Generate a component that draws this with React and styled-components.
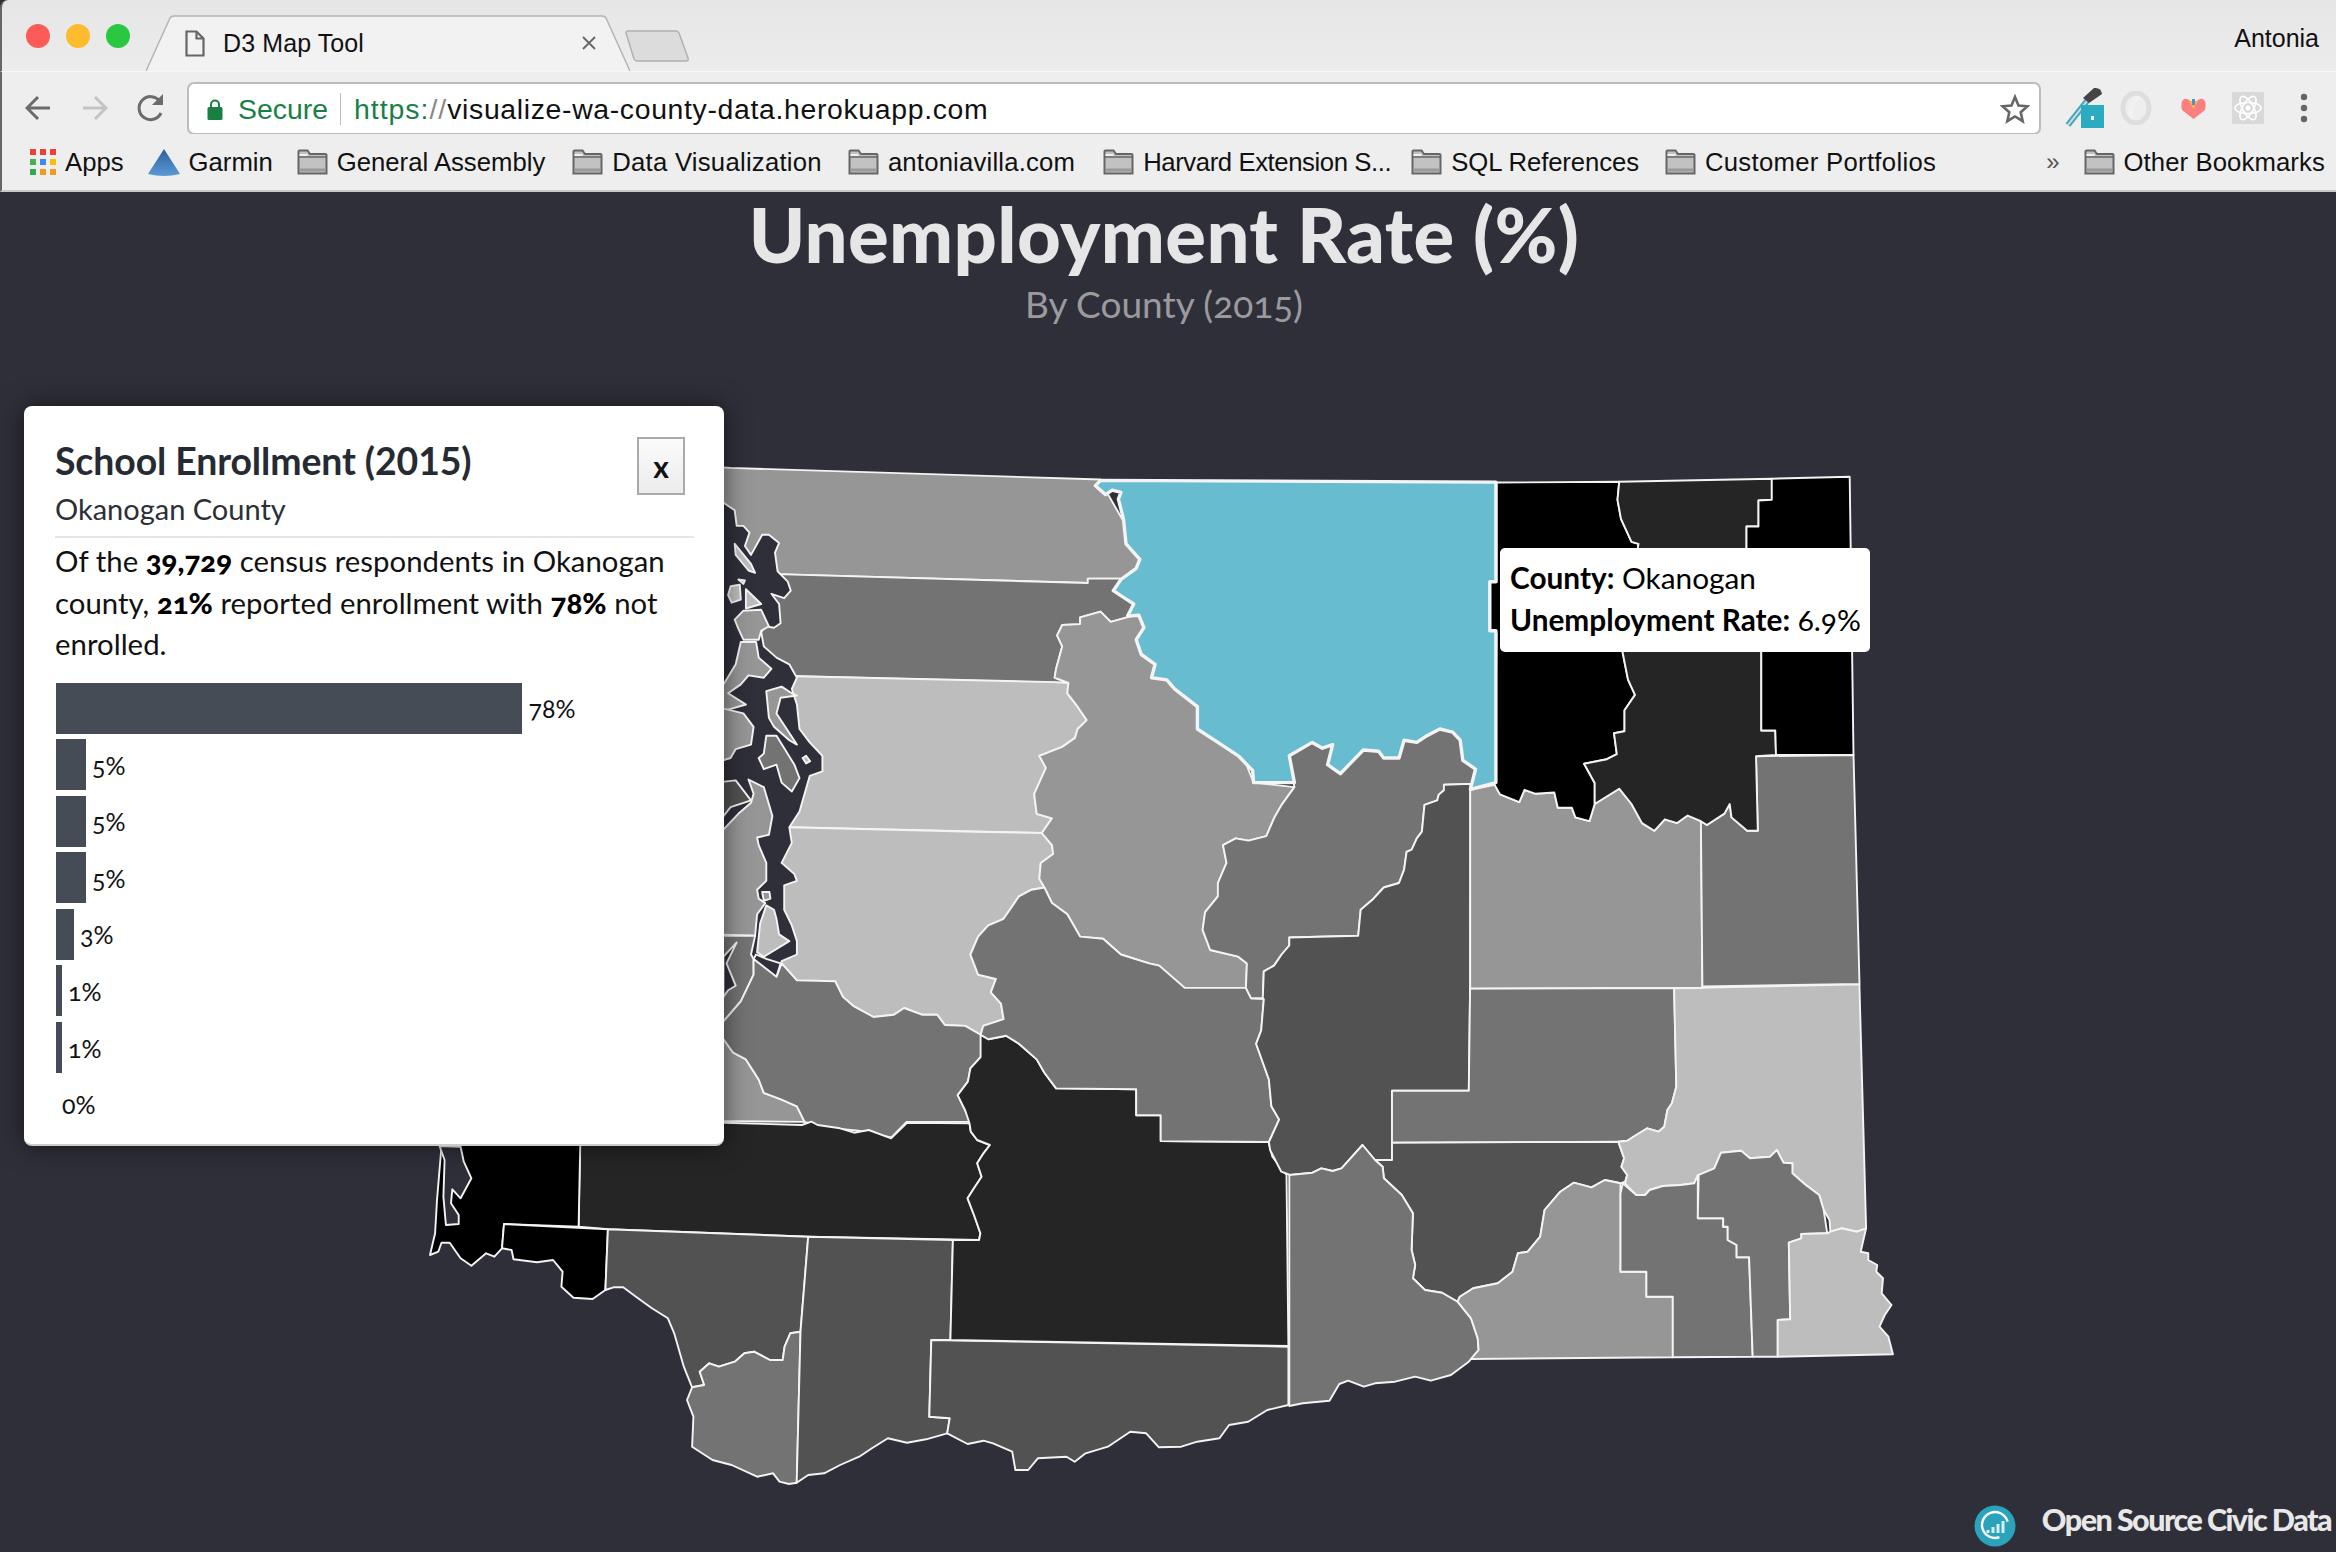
import React from 'react';
import styled, { createGlobalStyle } from 'styled-components';

const GlobalStyle = createGlobalStyle`
  html, body { margin: 0; padding: 0; background: #2f2f3a; }
  body { width: 2336px; height: 1552px; overflow: hidden; font-family: "Liberation Sans", Arial, sans-serif; }
`;

const Window = styled.div`
  width: 2336px;
  height: 1552px;
  display: flex;
  flex-direction: column;
  overflow: hidden;
`;

const TabBar = styled.div`
  height: 71px;
  flex: none;
  display: flex;
  align-items: flex-end;
  padding-left: 24px;
  background: linear-gradient(#e6e6e6, #ececec);
  border-left: 2px solid #666;
  box-sizing: border-box;
  border-top-left-radius: 8px;
`;

const Lights = styled.div`
  display: flex;
  gap: 16px;
  align-self: flex-start;
  margin-top: 24px;
`;

const Light = styled.span`
  width: 24px;
  height: 24px;
  border-radius: 50%;
  background: ${p => p.$color};
`;

const Tab = styled.div`
  position: relative;
  margin-left: 16px;
  width: 484px;
  height: 56px;
  display: flex;
  align-items: center;
  padding: 0 34px 0 39px;
  box-sizing: border-box;
  font-size: 25px;
  color: #111;
  svg.shape { position: absolute; left: 0; top: 0; }
`;

const TabText = styled.span`
  position: relative;
  margin-left: 18px;
  flex: 1;
  letter-spacing: 0.1px;
`;

const NewTab = styled.svg`
  margin-left: -6px;
  align-self: flex-start;
  margin-top: 30px;
`;

const Profile = styled.div`
  margin-left: auto;
  margin-right: 17px;
  align-self: flex-start;
  margin-top: 24px;
  font-size: 25px;
  color: #111;
`;

const Toolbar = styled.div`
  height: 63px;
  flex: none;
  box-sizing: border-box;
  padding: 10px 0 0 23px;
  display: flex;
  align-items: center;
  background: #eee;
  border-left: 2px solid #666;
  border-top: 1px solid #f6f6f6;
`;

const NavIcon = styled.svg`
  flex: none;
  margin-right: ${p => p.$gap}px;
`;

const Omnibox = styled.div`
  width: 1854px;
  height: 53px;
  flex: none;
  box-sizing: border-box;
  display: flex;
  align-items: center;
  padding: 2px 9px 0 18px;
  background: #fff;
  border: 2px solid #bcbcbc;
  border-radius: 7px;
  font-size: 28.4px;
  color: #111;
`;

const SecureLabel = styled.span`
  margin-left: 15px;
  color: #1a7f46;
`;

const Divider = styled.span`
  width: 1px;
  height: 32px;
  margin: 0 13px 0 12px;
  background: #bbb;
`;

const Scheme = styled.span`
  color: #1a7f46;
  letter-spacing: 1px;
`;

const Slashes = styled.span`
  color: #888;
  letter-spacing: 1px;
`;

const Host = styled.span`
  letter-spacing: 0.66px;
`;

const Star = styled.svg`
  margin-left: auto;
`;

const Extensions = styled.div`
  display: flex;
  align-items: center;
  margin-left: 24px;
`;

const ExtIcon = styled.svg`
  flex: none;
  margin-right: ${p => p.$gap}px;
`;

const BookmarkBar = styled.div`
  height: 58px;
  flex: none;
  box-sizing: border-box;
  display: flex;
  align-items: center;
  padding: 0 0 0 28px;
  background: #eee;
  border-left: 2px solid #666;
  border-bottom: 2px solid #c9c9c9;
  font-size: 25.7px;
  color: #111;
`;

const Bookmark = styled.div`
  display: flex;
  align-items: center;
  gap: 9px;
  flex: none;
  margin-right: ${p => p.$gap}px;
  letter-spacing: ${p => p.$track || 0}px;
  white-space: nowrap;
`;

const Chevron = styled.span`
  margin-left: 110px;
  margin-right: 24px;
  color: #555;
  font-size: 24px;
`;

const Page = styled.main`
  position: relative;
  flex: 1;
  background: #2f2f3a;
  overflow: hidden;
`;

const Heading = styled.header`
  height: 148px;
  box-sizing: border-box;
  padding: 4px 8px 0 0;
  text-align: center;
`;

const Title = styled.h1`
  margin: 0;
  font-family: Lato, sans-serif;
  font-weight: 900;
  font-size: 76px;
  line-height: 76px;
  color: #e6e6e6;
  letter-spacing: 0.4px;
`;

const Subtitle = styled.div`
  margin-top: 10px;
  font-family: Lato, sans-serif;
  font-weight: 400;
  font-size: 37px;
  line-height: 44px;
  color: #9b9b9f;
  font-variant-numeric: oldstyle-nums;
`;

const MapSvg = styled.svg`
  display: block;
`;

const Panel = styled.section`
  position: absolute;
  left: 24px;
  top: 214px;
  width: 700px;
  height: 740px;
  box-sizing: border-box;
  padding: 27px 30px 0 31px;
  background: #fff;
  border-radius: 8px;
  border-bottom: 2px solid #ccc;
  box-shadow: 0 0 26px rgba(0, 0, 0, 0.55);
  font-family: Lato, sans-serif;
`;

const PanelHead = styled.div`
  position: relative;
  padding-bottom: 6px;
  border-bottom: 2px solid #e6e6e6;
`;

const PanelTitle = styled.h2`
  margin: 0;
  font-size: 37.4px;
  line-height: 55px;
  font-weight: 700;
  color: #262b33;
  letter-spacing: -0.1px;
`;

const PanelSub = styled.div`
  font-size: 29px;
  line-height: 42px;
  color: #2b3038;
`;

const CloseBox = styled.button`
  position: absolute;
  right: 9px;
  top: 4px;
  width: 48px;
  height: 58px;
  padding: 0;
  box-sizing: border-box;
  border: 2px solid #aaa;
  background: linear-gradient(#fbfbfb, #ececec);
  font-family: Lato, sans-serif;
  font-weight: 700;
  font-size: 30px;
  color: #111;
`;

const PanelBody = styled.p`
  margin: 2px 0 18px;
  font-size: 29.3px;
  line-height: 41.5px;
  color: #111;
  letter-spacing: 0.05px;
  font-weight: 400;
  font-variant-numeric: oldstyle-nums;
  b { font-weight: 900; color: #000; }
`;

const Chart = styled.div`
  display: flex;
  flex-direction: column;
  gap: 5.6px;
  padding-left: 1px;
`;

const ChartRow = styled.div`
  display: flex;
  align-items: center;
  height: 51px;
  font-size: 25px;
  color: #111;
  font-variant-numeric: oldstyle-nums;
`;

const Bar = styled.div`
  height: 100%;
  background: #454c55;
`;

const BarValue = styled.span`
  margin-left: 6px;
`;

const Tip = styled.div`
  position: absolute;
  left: 1500px;
  top: 356px;
  width: 370px;
  height: 104px;
  box-sizing: border-box;
  padding: 9px 0 0 10px;
  background: #fff;
  border-radius: 5px;
  font-family: Lato, sans-serif;
  font-size: 29.8px;
  line-height: 42px;
  color: #000;
  white-space: nowrap;
  font-variant-numeric: oldstyle-nums;
  b { font-weight: 700; }
`;

const Credit = styled.div`
  position: absolute;
  right: 5px;
  bottom: 5px;
  display: flex;
  align-items: center;
  gap: 26px;
  font-family: Lato, sans-serif;
  font-weight: 900;
  font-size: 30.5px;
  color: #e8e8e8;
  letter-spacing: -1.55px;
`;

const CreditText = styled.span`
  position: relative;
  top: -7px;
`;

const FRAMES = {
  a: [700, 450, 1.96, 2.24],
  b: [1400, 450, 2.851, 2.613],
  c: [400, 1100, 1.568, 3],
  d: [1250, 950, 2.24, 3],
};

// boundaries were traced from crops, each list is in its crop's own scale
const toPath = (...parts) => {
  const out = [];
  for (const [frame, list] of parts) {
    const [ox, oy, sx, sy] = FRAMES[frame];
    list.trim().split(/\s+/).forEach(p => {
      const [x, y] = p.split(',').map(Number);
      out.push(`${(ox + x / sx).toFixed(1)} ${(oy + y / sy).toFixed(1)}`);
    });
  }
  return 'M' + out.join('L') + 'Z';
};

const G1 = '#000000', G2 = '#252525', G3 = '#525252', G4 = '#737373', G5 = '#969696', G6 = '#bdbdbd';
const WATER = '#2f2f3a';

const COUNTIES = [
  { fill: G5, parts: [['a', '30,38 60,40 785,66 800,100 880,260 830,288 760,288 760,298 150,278 100,278 30,200']] },
  { fill: G4, parts: [['a', '100,278 150,278 760,298 760,288 830,288 880,340 858,368 805,385 785,362 745,375 745,390 710,392 700,415 710,440 698,490 695,510 722,522 190,507 100,507']] },
  { fill: G6, parts: [['a', '100,507 190,507 695,520 722,522 720,545 740,575 758,605 740,625 735,645 710,665 665,685 678,712 655,770 660,815 690,825 670,858 175,845 100,845']] },
  { fill: G6, parts: [['a', '100,845 175,845 540,855 670,858 690,885 692,905 668,925 665,960 675,980 650,985 625,1000 595,1050 565,1065 545,1090 530,1130 545,1175 580,1185 570,1215 590,1240 595,1275 555,1290 550,1310 520,1290 480,1288 465,1265 435,1265 400,1250 380,1265 340,1270 300,1245 280,1225 265,1190 190,1188 160,1150 100,1150']] },
  { fill: G5, parts: [['a', '722,522 695,510 698,490 710,440 700,415 710,392 745,390 745,375 785,362 805,385 858,368 1000,500 1085,745 1165,755 1140,795 1125,825 1110,865 1075,875 1050,870 1025,885 1032,925 1015,970 1015,1000 990,1035 985,1075 1000,1120 1055,1135 1072,1150 1070,1205 950,1205 900,1155 880,1150 825,1130 790,1095 745,1090 720,1040 690,1015 675,980 665,960 668,925 692,905 690,885 670,858 690,825 660,815 655,770 678,712 665,685 710,665 735,645 740,625 758,605 740,575 720,545']] },
  // Puget Sound, islands go on top of it
  { fill: WATER, parts: [['a', '30,118 46,118 68,135 72,170 85,170 97,185 88,215 100,235 122,190 135,190 155,208 147,230 152,272 172,295 178,315 165,332 140,322 155,345 158,388 145,398 128,395 120,408 125,440 150,465 175,480 190,510 180,535 190,570 195,625 215,655 240,685 240,720 215,730 205,770 195,810 175,845 180,880 160,925 185,950 190,965 165,975 165,1030 180,1065 190,1100 190,1130 160,1145 150,1180 130,1170 105,1140 105,1175 80,1235 46,1280 30,1285']] },
  { fill: G6, parts: [['a', '68,210 100,255 108,275 95,270 70,235']] },
  { fill: G6, parts: [['a', '60,305 78,302 80,335 62,342 55,325']] },
  { fill: G6, parts: [['a', '75,290 88,292 85,300']] },
  { fill: G6, parts: [['a', '90,312 120,345 90,355']] },
  { fill: G5, parts: [['a', '68,380 85,360 120,358 135,395 120,405 115,425 85,425 75,400']] },
  { fill: G5, parts: [['a', '30,560 46,525 70,480 80,430 110,430 115,465 140,490 125,510 95,505 80,525 55,545 90,570 30,590']] },
  { fill: G5, parts: [['a', '30,575 85,590 105,620 100,660 70,670 60,690 30,700']] },
  { fill: G5, parts: [['a', '130,540 160,530 180,545 190,550 158,555 150,590 190,660 175,650 145,620 135,600']] },
  { fill: G4, parts: [['a', '130,640 150,640 185,705 195,735 180,765 160,745 150,705 125,715 115,690 125,680']] },
  { fill: G6, parts: [['a', '201,690 208,685 216,697 208,702']] },
  { fill: G5, parts: [['a', '30,850 46,850 75,815 100,790 105,770 95,738 125,755 142,820 135,862 112,868 115,885 130,925 130,965 112,985 115,1005 128,1015 112,1040 108,1088 30,1085']] },
  { fill: G3, parts: [['a', '30,745 70,740 100,785 60,800 46,820 30,825']] },
  { fill: G5, parts: [['a', '122,990 136,990 138,1005 125,1010']] },
  { fill: G6, parts: [['a', '130,1020 118,1060 112,1125 125,1135 175,1100 155,1085 150,1050 145,1030']] },
  { fill: G4, parts: [['a', '30,1088 108,1088 100,1130 105,1140 105,1175 80,1235 46,1280 30,1285']] },
  { fill: WATER, parts: [['a', '46,1135 72,1103 52,1150 70,1200 55,1210 46,1225']] },
  { fill: WATER, parts: [['a', '105,1140 130,1170 150,1180 158,1150 130,1140 110,1130']] },
  { fill: G5, parts: [['a', '30,1300 46,1320 65,1350 90,1365 115,1410 125,1440 160,1455 190,1470 205,1505 30,1503']] },
  { fill: G4, parts: [['a', '30,1285 46,1280 80,1235 105,1175 105,1140 150,1180 160,1150 190,1188 265,1190 280,1225 300,1245 340,1270 380,1265 400,1250 435,1265 465,1265 480,1288 520,1290 550,1310 565,1320 550,1360 530,1385 525,1415 505,1445 520,1480 530,1505 405,1505 375,1540 330,1530 310,1525 270,1520 235,1515 205,1505 190,1470 160,1455 125,1440 115,1410 90,1365 65,1350 46,1320 30,1300']] },
  // southwest
  { fill: G2, parts: [['c', '283,40 507,68 630,75 645,65 655,75 690,85 712,98 735,90 770,115 795,68 893,70 895,95 905,120 925,135 915,160 905,190 912,230 900,265 890,295 900,345 910,400 908,420 640,410 326,388 280,380']] },
  { fill: G1, parts: [['c', '60,100 65,138 58,300 55,400 47,465 60,455 65,428 78,428 95,475 112,497 135,460 148,470 160,445 163,372 280,380 283,100']] },
  { fill: WATER, parts: [['c', '62,138 70,180 68,290 72,375 92,372 92,345 80,310 82,268 95,295 112,235 100,185 95,140']] },
  { fill: G1, parts: [['c', '163,372 326,388 322,570 302,597 272,593 253,560 255,515 240,480 215,487 178,478 175,450 160,445']] },
  { fill: G3, parts: [['c', '326,388 640,410 628,695 612,700 603,740 600,780 580,780 555,755 540,760 525,785 500,800 485,790 470,815 477,855 458,862 445,800 430,700 420,655 395,625 370,590 350,562 335,562 322,570']] },
  { fill: G4, parts: [['c', '458,862 477,855 470,815 485,790 500,800 525,785 540,760 555,755 580,780 600,780 603,740 612,700 628,695 622,1148 610,1152 595,1145 585,1120 560,1130 520,1095 490,1080 458,1040 460,950 450,900']] },
  { fill: G3, parts: [['c', '640,410 867,420 863,720 833,720 830,950 862,955 858,1000 825,1018 795,1028 765,1015 740,1045 720,1070 690,1095 665,1120 640,1125 622,1148 628,695']] },
  { fill: G3, parts: [['c', '833,720 1393,740 1393,915 1360,930 1330,965 1300,975 1285,1015 1250,1025 1225,1040 1190,1042 1170,1000 1145,995 1110,1040 1075,1060 1058,1085 1045,1070 1000,1075 985,1110 965,1110 960,1055 930,1030 915,1022 890,1032 858,1000 862,955 830,950']] },
  // Yakima
  { fill: G2, parts: [['a', '550,1310 565,1320 600,1312 625,1330 660,1365 675,1395 698,1430 855,1432 855,1490 903,1490 903,1548 1115,1550'], ['c', '1362,126 1368,170 1390,225 1393,738 863,720 867,420 908,420 910,400 900,345 890,295 900,265 912,230 905,190 915,160 925,135 905,120 895,95 893,70'], ['a', '520,1480 505,1445 525,1415 530,1385 550,1360']] },
  // Kittitas
  { fill: G4, parts: [['a', '550,1310 555,1290 595,1275 590,1240 570,1215 580,1185 545,1175 530,1130 545,1090 565,1065 595,1050 625,1000 650,985 675,980 690,1015 720,1040 745,1090 790,1095 825,1130 880,1150 900,1155 950,1205 1070,1205 1080,1228 1105,1230 1100,1300 1090,1330 1115,1410 1120,1470 1135,1500 1115,1550 903,1548 903,1490 855,1490 855,1432 698,1430 675,1395 660,1365 625,1330 600,1312 565,1320']] },
  // Douglas
  { fill: G4, parts: [['a', '1165,755 1155,685 1200,655 1220,668 1240,660 1230,705 1255,725 1300,672 1330,675 1340,690 1370,690 1380,650 1405,655 1425,640 1450,625 1475,632 1490,650 1495,695 1520,715 1510,760 1510,748 1458,750 1458,762 1448,772 1445,785 1420,795 1415,855 1405,870 1395,895 1385,900 1380,940 1370,970 1340,980 1320,1005 1295,1030 1290,1088 1155,1092 1155,1110 1140,1130 1125,1155 1105,1168 1103,1228 1080,1228 1070,1205 1072,1150 1055,1135 1000,1120 985,1075 990,1035 1015,1000 1015,970 1032,925 1025,885 1050,870 1075,875 1110,865 1125,825 1140,795']] },
  // Grant
  { fill: G3, parts: [['a', '1510,748 1458,750 1458,762 1448,772 1445,785 1420,795 1415,855 1405,870 1395,895 1385,900 1380,940 1370,970 1340,980 1320,1005 1295,1030 1290,1088 1155,1092 1155,1110 1140,1130 1125,1155 1105,1168 1103,1228 1105,1230 1100,1300 1090,1330 1115,1410 1120,1470 1135,1500 1115,1550'], ['d', '42,575 45,600 70,665 90,675 140,668 160,655 185,663 205,655 252,585 280,630 318,630 318,422 490,422 493,115 493,0']] },
  // Adams, Franklin, Benton, Walla Walla
  { fill: G4, parts: [['d', '493,115 950,115 955,410 945,460 935,480 928,530 915,545 890,535 865,555 845,572 825,575 318,578 318,422 490,422']] },
  { fill: G3, parts: [['d', '318,578 825,575 838,625 832,650 845,675 840,695 830,700 795,690 765,712 725,698 695,725 660,780 650,860 622,905 600,910 588,965 555,1000 500,1015 470,1040 465,1055 430,1028 392,1020 365,985 370,945 362,900 365,790 340,735 300,685 297,650 280,630 318,630']] },
  { fill: G4, parts: [['d', '88,675 140,668 160,655 185,663 205,655 252,585 280,630 297,650 300,685 340,735 365,790 362,900 370,945 365,985 392,1020 430,1028 465,1055 495,1105 510,1165 512,1200 490,1235 450,1275 405,1292 370,1280 325,1295 280,1300 255,1310 220,1292 200,1302 178,1352 118,1360 88,1368']] },
  { fill: G5, parts: [['d', '465,1055 470,1040 500,1015 555,1000 588,965 600,910 622,905 650,860 660,780 695,725 725,698 765,712 795,690 830,700 830,965 888,965 888,1040 947,1040 947,1222 495,1227 512,1200 510,1165 495,1105']] },
  // Whitman, Columbia, Garfield, Asotin
  { fill: G6, parts: [['d', '950,115 1365,103 1380,835 1360,845 1325,835 1300,845 1298,810 1285,780 1275,735 1245,705 1215,670 1215,640 1195,638 1180,600 1165,620 1120,625 1100,602 1055,608 1040,655 1005,675 995,700 965,705 925,708 895,720 885,735 865,735 840,700 845,675 832,650 838,625 825,575 845,572 865,555 890,535 915,545 928,530 935,480 945,460 955,410']] },
  { fill: G4, parts: [['d', '830,730 835,700 865,735 885,735 895,720 925,708 965,705 995,700 1003,675 1003,805 1060,805 1060,830 1070,830 1070,870 1090,885 1090,922 1118,922 1126,1220 947,1222 947,1040 888,1040 888,965 830,965']] },
  { fill: G4, parts: [['d', '1005,675 1040,655 1055,608 1100,602 1120,625 1165,620 1180,600 1195,638 1215,640 1215,670 1245,705 1275,735 1285,780 1293,850 1235,852 1235,865 1207,878 1210,1108 1182,1110 1182,1220 1126,1220 1118,922 1090,922 1090,885 1070,870 1070,830 1060,830 1060,805 1003,805']] },
  { fill: G6, parts: [['d', '1293,850 1300,845 1325,835 1360,845 1380,835 1368,905 1385,910 1385,930 1405,945 1403,965 1418,985 1415,1030 1437,1065 1422,1095 1410,1130 1430,1160 1440,1213 1182,1220 1182,1110 1210,1108 1207,878 1235,865 1235,852']] },
  // northeast
  { fill: G5, parts: [['b', '200,888 270,875 285,900 340,920 355,888 385,898 440,895 450,935 490,935 500,960 540,970 555,925 625,885 660,925 690,975 725,995 755,965 790,975 820,955 858,970 862,1405 200,1407']] },
  { fill: G4, parts: [['b', '858,970 875,980 925,950 940,925 945,960 990,995 1020,995 1015,800 1293,797 1310,1395 862,1402']] },
  { fill: G1, parts: [['b', '275,85 625,83 620,130 630,180 660,240 680,245 670,300 640,450 635,530 650,600 670,640 640,680 640,735 610,740 618,795 590,808 525,820 555,870 555,925 540,970 500,960 490,935 450,935 440,895 385,898 355,888 340,920 285,900 270,875 275,480 255,478 255,345 275,345']] },
  { fill: G2, parts: [['b', '625,83 1060,75 1060,130 1022,132 1022,200 988,200 988,260 1030,530 1030,733 1070,733 1072,797 1015,800 1020,995 990,995 945,960 940,925 925,950 875,980 858,970 820,955 790,975 755,965 725,995 690,975 660,925 625,885 555,925 555,870 525,820 590,808 618,795 610,740 640,735 640,680 670,640 650,600 635,530 640,450 670,300 680,245 660,240 630,180 620,130']] },
  { fill: G1, parts: [['b', '1060,75 1282,70 1293,797 1072,797 1070,733 1030,733 1030,530 988,260 988,200 1022,200 1022,132 1060,130']] },
];

const OKANOGAN = toPath(['a', '785,68 1560,72 1560,295 1548,295 1548,405 1560,405 1560,745 1510,760 1520,715 1495,695 1490,650 1475,632 1450,625 1425,640 1405,655 1380,650 1370,690 1340,690 1330,675 1300,672 1255,725 1230,705 1240,660 1220,668 1200,655 1155,685 1165,745 1085,745 1083,718 1055,685 1015,655 975,625 975,575 930,535 915,515 885,510 892,480 865,458 855,425 870,398 860,370 838,372 850,345 830,330 810,315 825,290 855,265 862,245 835,210 830,155 820,110 825,95 808,90 795,100 775,80']);

const County = styled.path`
  fill: ${p => p.$fill};
  stroke: #f4f4f4;
  stroke-width: ${p => p.$heavy ? 3.4 : 1.9}px;
  stroke-linejoin: round;
`;

const Folder = () => (
  <svg width="31" height="26" viewBox="0 0 31 26">
    <path d="M1.500 24.500V2.500a1 1 0 0 1 1-1h8l2.500 3.500h15.500a1 1 0 0 1 1 1v18.500z" fill="#c2c2c2" stroke="#666" strokeWidth="2" />
    <path d="M2 8h27" stroke="#666" strokeWidth="1.500" />
    <path d="M2.500 6h8" stroke="#f0f0f0" strokeWidth="2" />
    <path d="M3 21h25" stroke="#999" strokeWidth="3" />
  </svg>
);

const APP_COLORS = ['#ea4335', '#ea4335', '#ea4335', '#4caf50', '#4285f4', '#fbbc05', '#34a853', '#f09a20', '#f09a20'];

const AppsIcon = () => (
  <svg width="26" height="26" viewBox="0 0 26 26">
    {APP_COLORS.map((c, i) => (
      <rect key={i} x={(i % 3) * 10} y={Math.floor(i / 3) * 10} width="6" height="6" fill={c} />
    ))}
  </svg>
);

const GarminIcon = () => (
  <svg width="32" height="27" viewBox="0 0 32 27">
    <defs>
      <linearGradient id="gar" x1="0" y1="0" x2="0" y2="1">
        <stop offset="0" stopColor="#2d5f9e" />
        <stop offset="1" stopColor="#5a9ad6" />
      </linearGradient>
    </defs>
    <path d="M16 0L32 25Q16 29 0 25z" fill="url(#gar)" />
  </svg>
);

const BOOKMARKS = [
  { label: 'General Assembly', gap: 27, track: 0 },
  { label: 'Data Visualization', gap: 26, track: 0.25 },
  { label: 'antoniavilla.com', gap: 28, track: 0.19 },
  { label: 'Harvard Extension S...', gap: 20, track: -0.4 },
  { label: 'SQL References', gap: 26, track: -0.1 },
  { label: 'Customer Portfolios', gap: 0, track: 0.3 },
];

const CHART = [78, 5, 5, 5, 3, 1, 1, 0];

export default function App() {
  return (
    <Window>
      <GlobalStyle />
      <TabBar>
        <Lights>
          <Light $color="#fc5b57" />
          <Light $color="#fdbb2e" />
          <Light $color="#2ac840" />
        </Lights>
        <Tab>
          <svg className="shape" width="484" height="56" viewBox="0 0 484 56">
            <path d="M0 56L24 3Q25 1 28 1H456Q459 1 460 3L484 56" fill="#f2f2f2" stroke="#b4b4b4" strokeWidth="1.500" />
          </svg>
          <svg style={{ position: 'relative' }} width="20" height="27" viewBox="0 0 20 27">
            <path d="M1.500 1.500h10l7 7v17h-17z M11.500 1.500v7h7" fill="none" stroke="#666" strokeWidth="2.200" />
          </svg>
          <TabText>D3 Map Tool</TabText>
          <svg style={{ position: 'relative' }} width="14" height="14" viewBox="0 0 14 14">
            <path d="M1 1L13 13M13 1L1 13" stroke="#666" strokeWidth="1.800" />
          </svg>
        </Tab>
        <NewTab width="66" height="33" viewBox="0 0 66 33">
          <path d="M2 3Q2 1 4 1H52Q54 1 55 3L64 28Q65 31 62 31H13Q11 31 10 29z" fill="#dcdcdc" stroke="#b0b0b0" strokeWidth="1.500" />
        </NewTab>
        <Profile>Antonia</Profile>
      </TabBar>
      <Toolbar>
        <NavIcon $gap={31} width="26" height="26" viewBox="0 0 26 26">
          <path d="M25 13H3M13 2L2 13l11 11" fill="none" stroke="#6b6b6b" strokeWidth="3" />
        </NavIcon>
        <NavIcon $gap={29} width="26" height="26" viewBox="0 0 26 26">
          <path d="M1 13h22M13 2l11 11-11 11" fill="none" stroke="#c4c4c4" strokeWidth="3" />
        </NavIcon>
        <NavIcon $gap={22} width="28" height="30" viewBox="0 0 28 30">
          <path d="M24 20a11.500 11.500 0 1 1-1-11.500" fill="none" stroke="#6b6b6b" strokeWidth="3" />
          <path d="M26 1v11H15z" fill="#6b6b6b" />
        </NavIcon>
        <Omnibox>
          <svg width="16" height="21" viewBox="0 0 16 21">
            <path d="M4 9V5.500a4 4 0 0 1 8 0V9" fill="none" stroke="#188043" strokeWidth="2" />
            <rect x="0.500" y="8" width="15" height="13" rx="1.500" fill="#188043" />
          </svg>
          <SecureLabel>Secure</SecureLabel>
          <Divider />
          <Scheme>https:</Scheme>
          <Slashes>//</Slashes>
          <Host>visualize-wa-county-data.herokuapp.com</Host>
          <Star width="30" height="30" viewBox="0 0 30 30">
            <path d="M15 3l3.500 8.500 9 .8-6.800 6 2 8.900L15 22.500l-7.700 4.700 2-8.900-6.800-6 9-.8z" fill="none" stroke="#666" strokeWidth="2.600" />
          </Star>
        </Omnibox>
        <Extensions>
          <ExtIcon $gap={15} width="40" height="42" viewBox="0 0 40 42">
            <path d="M3 38L22 14" stroke="#4aa5b8" strokeWidth="6" />
            <path d="M3 38L22 14" stroke="#c9dfe4" strokeWidth="2" />
            <path d="M24 16l-6-5 11-10q7-1 8 6z" fill="#444" />
            <rect x="16" y="18" width="23" height="23" fill="#2babc0" />
            <rect x="26" y="29" width="3" height="4" fill="#fff" />
          </ExtIcon>
          <ExtIcon $gap={28} width="32" height="34" viewBox="0 0 32 34">
            <ellipse cx="16" cy="17" rx="13" ry="15" fill="none" stroke="#dedede" strokeWidth="5" />
            <path d="M12 27Q8 12 20 6" fill="none" stroke="#f2f2f2" strokeWidth="4" />
          </ExtIcon>
          <ExtIcon $gap={25} width="27" height="24" viewBox="0 0 27 24">
            <path d="M13.500 23L2 14Q0 6 4 3q4-1 9.500 5Q19 2 23 3q4 3 2 11z" fill="#fb7f7f" />
            <path d="M9 5l4.500 8L18 5z" fill="#f5b93c" />
            <path d="M12 3h3v6h-3z" fill="#4a90d9" />
          </ExtIcon>
          <ExtIcon $gap={36} width="32" height="32" viewBox="0 0 32 32">
            <rect width="32" height="32" fill="#d9d9d9" />
            <g fill="none" stroke="#fff" strokeWidth="1.600">
              <ellipse cx="16" cy="16" rx="13" ry="5.500" />
              <ellipse cx="16" cy="16" rx="13" ry="5.500" transform="rotate(60 16 16)" />
              <ellipse cx="16" cy="16" rx="13" ry="5.500" transform="rotate(120 16 16)" />
            </g>
            <circle cx="16" cy="16" r="2.600" fill="#fff" />
          </ExtIcon>
          <svg width="8" height="30" viewBox="0 0 8 30">
            <circle cx="4" cy="4" r="3.200" fill="#666" />
            <circle cx="4" cy="15" r="3.200" fill="#666" />
            <circle cx="4" cy="26" r="3.200" fill="#666" />
          </svg>
        </Extensions>
      </Toolbar>
      <BookmarkBar>
        <Bookmark $gap={24}><AppsIcon />Apps</Bookmark>
        <Bookmark $gap={24}><GarminIcon />Garmin</Bookmark>
        {BOOKMARKS.map(b => (
          <Bookmark key={b.label} $gap={b.gap} $track={b.track}><Folder />{b.label}</Bookmark>
        ))}
        <Chevron>»</Chevron>
        <Bookmark $gap={0} $track={0.1}><Folder />Other Bookmarks</Bookmark>
      </BookmarkBar>
      <Page>
        <Heading>
          <Title>Unemployment Rate (%)</Title>
          <Subtitle>By County (2015)</Subtitle>
        </Heading>
        <MapSvg width="2336" height="1212" viewBox="0 340 2336 1212">
          {COUNTIES.map((c, i) => (
            <County key={i} d={toPath(...c.parts)} $fill={c.fill} />
          ))}
          <County d={OKANOGAN} $fill="#68bcd0" $heavy />
        </MapSvg>
        <Panel>
          <PanelHead>
            <PanelTitle>School Enrollment (2015)</PanelTitle>
            <PanelSub>Okanogan County</PanelSub>
            <CloseBox>x</CloseBox>
          </PanelHead>
          <PanelBody>
            Of the <b>39,729</b> census respondents in Okanogan county, <b>21%</b> reported enrollment with <b>78%</b> not enrolled.
          </PanelBody>
          <Chart>
            {CHART.map((v, i) => (
              <ChartRow key={i}>
                <Bar style={{ width: v * 5.98 }} />
                <BarValue>{v}%</BarValue>
              </ChartRow>
            ))}
          </Chart>
        </Panel>
        <Tip>
          <div><b>County:</b> Okanogan</div>
          <div><b>Unemployment Rate:</b> 6.9%</div>
        </Tip>
        <Credit>
          <svg width="42" height="42" viewBox="0 0 42 42">
            <circle cx="21" cy="21" r="20.500" fill="#2aa3bb" />
            <circle cx="21" cy="20" r="13" fill="none" stroke="#fff" strokeWidth="2.400" strokeDasharray="62 20" transform="rotate(70 21 20)" />
            <path d="M14 28v-3M19 28v-6M24 28v-9M29 28v-12" stroke="#d6f0f5" strokeWidth="3" />
          </svg>
          <CreditText>Open Source Civic Data</CreditText>
        </Credit>
      </Page>
    </Window>
  );
}
